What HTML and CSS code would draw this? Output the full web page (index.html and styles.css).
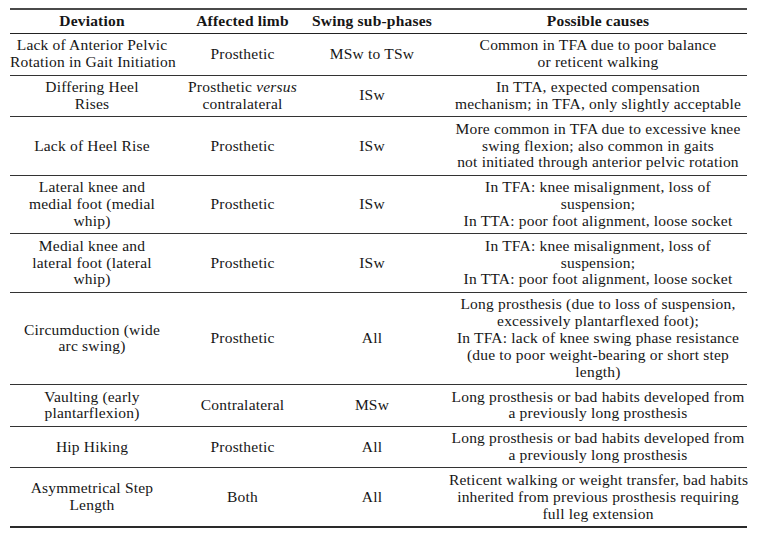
FILE: index.html
```html
<!DOCTYPE html>
<html lang="en">
<head>
<meta charset="utf-8">
<title>Gait deviations during swing phase</title>
<link rel="stylesheet" href="styles.css">
</head>
<body>
<table class="dev-table">
  <thead>
    <tr>
      <th class="c1">Deviation</th>
      <th class="c2">Affected limb</th>
      <th class="c3">Swing sub-phases</th>
      <th class="c4">Possible causes</th>
    </tr>
  </thead>
  <tbody>
    <tr>
      <td class="c1">Lack of Anterior Pelvic<br>Rotation in Gait Initiation</td>
      <td class="c2">Prosthetic</td>
      <td class="c3">MSw to TSw</td>
      <td class="c4">Common in TFA due to poor balance<br>or reticent walking</td>
    </tr>
    <tr>
      <td class="c1">Differing Heel<br>Rises</td>
      <td class="c2">Prosthetic <i>versus</i><br>contralateral</td>
      <td class="c3">ISw</td>
      <td class="c4">In TTA, expected compensation<br>mechanism; in TFA, only slightly acceptable</td>
    </tr>
    <tr>
      <td class="c1">Lack of Heel Rise</td>
      <td class="c2">Prosthetic</td>
      <td class="c3">ISw</td>
      <td class="c4">More common in TFA due to excessive knee<br>swing flexion; also common in gaits<br>not initiated through anterior pelvic rotation</td>
    </tr>
    <tr>
      <td class="c1">Lateral knee and<br>medial foot (medial<br>whip)</td>
      <td class="c2">Prosthetic</td>
      <td class="c3">ISw</td>
      <td class="c4">In TFA: knee misalignment, loss of<br>suspension;<br>In TTA: poor foot alignment, loose socket</td>
    </tr>
    <tr>
      <td class="c1">Medial knee and<br>lateral foot (lateral<br>whip)</td>
      <td class="c2">Prosthetic</td>
      <td class="c3">ISw</td>
      <td class="c4">In TFA: knee misalignment, loss of<br>suspension;<br>In TTA: poor foot alignment, loose socket</td>
    </tr>
    <tr>
      <td class="c1">Circumduction (wide<br>arc swing)</td>
      <td class="c2">Prosthetic</td>
      <td class="c3">All</td>
      <td class="c4">Long prosthesis (due to loss of suspension,<br>excessively plantarflexed foot);<br>In TFA: lack of knee swing phase resistance<br>(due to poor weight-bearing or short step<br>length)</td>
    </tr>
    <tr>
      <td class="c1">Vaulting (early<br>plantarflexion)</td>
      <td class="c2">Contralateral</td>
      <td class="c3">MSw</td>
      <td class="c4">Long prosthesis or bad habits developed from<br>a previously long prosthesis</td>
    </tr>
    <tr>
      <td class="c1">Hip Hiking</td>
      <td class="c2">Prosthetic</td>
      <td class="c3">All</td>
      <td class="c4">Long prosthesis or bad habits developed from<br>a previously long prosthesis</td>
    </tr>
    <tr class="last">
      <td class="c1">Asymmetrical Step<br>Length</td>
      <td class="c2">Both</td>
      <td class="c3">All</td>
      <td class="c4">Reticent walking or weight transfer, bad habits<br>inherited from previous prosthesis requiring<br>full leg extension</td>
    </tr>
  </tbody>
</table>
</body>
</html>
```

FILE: styles.css
```css
html, body {
  margin: 0;
  padding: 0;
  background: #ffffff;
}

body {
  font-family: "Liberation Serif", "Times New Roman", serif;
  font-size: 15.5px;
  letter-spacing: 0.2px;
  color: #161616;
}

.dev-table {
  margin: 8px 0 0 10px;
  width: 737px;
  border-collapse: collapse;
  table-layout: fixed;
  border-top: 2px solid #4a4a4a;
  border-bottom: 2px solid #2a2a2a;
}

.dev-table th,
.dev-table td {
  text-align: center;
  vertical-align: middle;
  white-space: nowrap;
  line-height: 16.85px;
  padding: 3.5px 0;
}

.dev-table th {
  font-weight: bold;
  padding: 3px 0;
  border-bottom: 1px solid #222222;
}

.dev-table td {
  border-bottom: 1px solid #333333;
}

.dev-table tr.last td {
  border-bottom: none;
}

.c1 { width: 164px; }
.c2 { width: 137px; }
.c3 { width: 122px; }
.c4 { width: 314px; padding-left: 16px !important; box-sizing: border-box; }
```
